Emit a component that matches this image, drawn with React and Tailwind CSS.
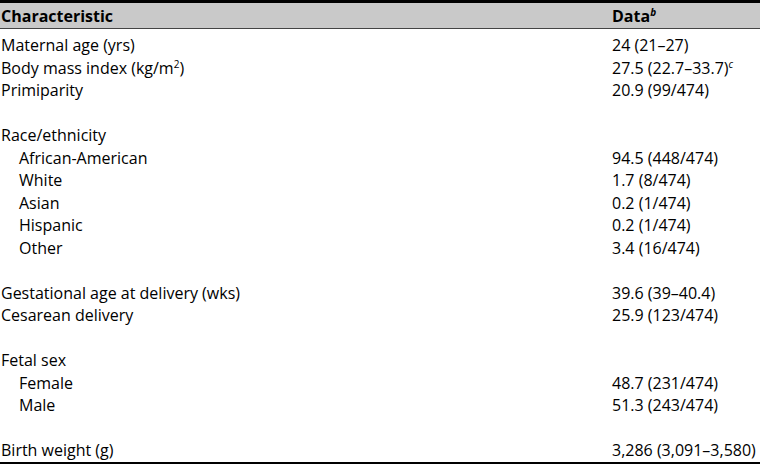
import React from "react";

const rows = [
  { l: "Maternal age (yrs)", d: "24 (21–27)" },
  { l: <>Body mass index (kg/m<sup className="text-[10px] relative -top-[6px]">2</sup>)</>, d: <>27.5 (22.7–33.7)<sup className="text-[10px] italic relative -top-[6px]">c</sup></> },
  { l: "Primiparity", d: "20.9 (99/474)" },
  { blank: true },
  { l: "Race/ethnicity", d: "" },
  { l: "African-American", d: "94.5 (448/474)", i: true },
  { l: "White", d: "1.7 (8/474)", i: true },
  { l: "Asian", d: "0.2 (1/474)", i: true },
  { l: "Hispanic", d: "0.2 (1/474)", i: true },
  { l: "Other", d: "3.4 (16/474)", i: true },
  { blank: true },
  { l: "Gestational age at delivery (wks)", d: "39.6 (39–40.4)" },
  { l: "Cesarean delivery", d: "25.9 (123/474)" },
  { blank: true },
  { l: "Fetal sex", d: "" },
  { l: "Female", d: "48.7 (231/474)", i: true },
  { l: "Male", d: "51.3 (243/474)", i: true },
  { blank: true },
  { l: "Birth weight (g)", d: "3,286 (3,091–3,580)" },
];

export default function App() {
  return (
    <div className="w-[760px] h-[464px] bg-white text-black font-['Open_Sans',sans-serif] text-[16px] overflow-hidden">
      <div className="border-t-[3px] border-b-[3px] border-black">
        <div className="flex h-[26px] items-center bg-[#c9c9c9] border-b border-[#444] font-bold">
          <div className="w-[612px] pl-[1px]">Characteristic</div>
          <div>
            Data<sup className="text-[10px] italic relative -top-[6px]">b</sup>
          </div>
        </div>
        <div className="flex flex-col pt-[5px]">
          {rows.map((r, idx) =>
            r.blank ? (
              <div key={idx} className="h-[22.5px]" />
            ) : (
              <div key={idx} className="flex h-[22.5px] items-center leading-none">
                <div className={"w-[612px] " + (r.i ? "pl-[19px]" : "pl-[1px]")}>{r.l}</div>
                <div>{r.d}</div>
              </div>
            )
          )}
        </div>
      </div>
    </div>
  );
}
